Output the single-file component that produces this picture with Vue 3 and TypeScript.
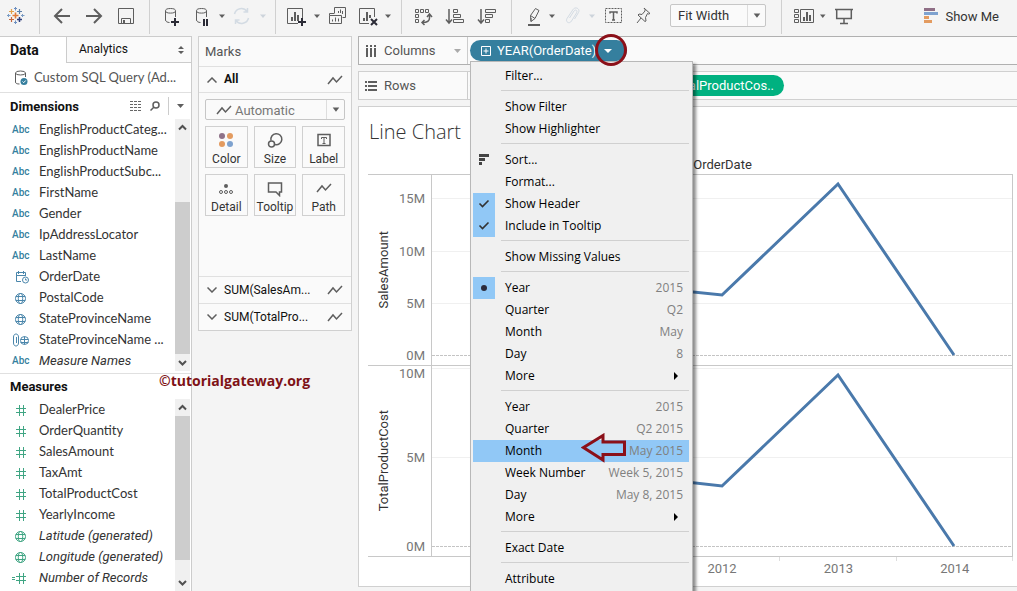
<script setup lang="ts">
import { ref } from 'vue'

type FieldIcon = 'abc' | 'date' | 'globe' | 'clip' | 'num' | 'calc'
interface Field { name: string; icon: FieldIcon; generated?: boolean }
interface MenuItem { label: string; hint?: string; mark?: 'check' | 'dot' | 'sort'; sub?: boolean; active?: boolean }
interface Tick { label: string; y: number; zero?: boolean; labelY?: number }
interface Pane { title: string; ticks: Tick[]; points: string }

const dimensions: Field[] = [
  { name: 'EnglishProductCateg...', icon: 'abc' },
  { name: 'EnglishProductName', icon: 'abc' },
  { name: 'EnglishProductSubc...', icon: 'abc' },
  { name: 'FirstName', icon: 'abc' },
  { name: 'Gender', icon: 'abc' },
  { name: 'IpAddressLocator', icon: 'abc' },
  { name: 'LastName', icon: 'abc' },
  { name: 'OrderDate', icon: 'date' },
  { name: 'PostalCode', icon: 'globe' },
  { name: 'StateProvinceName', icon: 'globe' },
  { name: 'StateProvinceName ...', icon: 'clip' },
  { name: 'Measure Names', icon: 'abc', generated: true },
]
const measures: Field[] = [
  { name: 'DealerPrice', icon: 'num' },
  { name: 'OrderQuantity', icon: 'num' },
  { name: 'SalesAmount', icon: 'num' },
  { name: 'TaxAmt', icon: 'num' },
  { name: 'TotalProductCost', icon: 'num' },
  { name: 'YearlyIncome', icon: 'num' },
  { name: 'Latitude (generated)', icon: 'globe', generated: true },
  { name: 'Longitude (generated)', icon: 'globe', generated: true },
  { name: 'Number of Records', icon: 'calc', generated: true },
]
const fieldGroups = [
  { title: 'Dimensions', key: 'dim', fields: dimensions },
  { title: 'Measures', key: 'mea', fields: measures },
]
const menu: MenuItem[][] = [
  [{ label: 'Filter...' }],
  [{ label: 'Show Filter' }, { label: 'Show Highlighter' }],
  [
    { label: 'Sort...', mark: 'sort' },
    { label: 'Format...' },
    { label: 'Show Header', mark: 'check' },
    { label: 'Include in Tooltip', mark: 'check' },
  ],
  [{ label: 'Show Missing Values' }],
  [
    { label: 'Year', hint: '2015', mark: 'dot' },
    { label: 'Quarter', hint: 'Q2' },
    { label: 'Month', hint: 'May' },
    { label: 'Day', hint: '8' },
    { label: 'More', sub: true },
  ],
  [
    { label: 'Year', hint: '2015' },
    { label: 'Quarter', hint: 'Q2 2015' },
    { label: 'Month', hint: 'May 2015', active: true },
    { label: 'Week Number', hint: 'Week 5, 2015' },
    { label: 'Day', hint: 'May 8, 2015' },
    { label: 'More', sub: true },
  ],
  [{ label: 'Exact Date' }],
  [{ label: 'Attribute' }],
]
const panes: Pane[] = [
  {
    title: 'SalesAmount',
    ticks: [{ label: '15M', y: 23 }, { label: '10M', y: 76 }, { label: '5M', y: 128 }, { label: '0M', y: 180, zero: true }],
    points: '58,177 174,108 290,120 406,9 522,180',
  },
  {
    title: 'TotalProductCost',
    ticks: [{ label: '10M', y: 2, labelY: 7 }, { label: '5M', y: 91 }, { label: '0M', y: 180, zero: true }],
    points: '58,177 174,107 290,120 406,9 522,180',
  },
]
const paneHeight = 190
const years = ['2010', '2011', '2012', '2013', '2014']
const markButtons = ['Color', 'Size', 'Label', 'Detail', 'Tooltip', 'Path']
const markCards = ['SUM(SalesAm...', 'SUM(TotalPro...']
const fit = ref('Fit Width')
const markType = ref('Automatic')
</script>

<template>
  <div class="app">
    <header class="toolbar">
      <div class="group g-logo">
        <svg class="ic" viewBox="0 0 24 24" aria-hidden="true" fill="none" stroke-width="1.2">
          <path d="M11.500 8.500v6M8.500 11.500h6" stroke="#e07b39" stroke-width="1.600" />
          <path d="M7.500 5v5M5 7.500h5" stroke="#e3a04b" /><path d="M15.500 5v5M13 7.500h5" stroke="#5b7fa8" />
          <path d="M7.500 13v5M5 15.500h5" stroke="#c5673f" /><path d="M15.500 13v5M13 15.500h5" stroke="#2f3f7c" stroke-width="1.500" />
          <path d="M11.500 3v3.500M10 4.500h3M11.500 16.500V20M10 18.500h3" stroke="#6d8fc0" stroke-width="1" />
          <path d="M4.500 10v3M3 11.500h3.500M18.500 10v3M17 11.500h3.500" stroke="#7b9cc4" stroke-width="1" />
        </svg>
      </div>
      <div class="group g-nav">
        <button aria-label="Undo"><svg class="ic" viewBox="0 0 24 24"><path class="s2" d="M20 12H5M12 5l-7 7 7 7" /></svg></button>
        <button aria-label="Redo"><svg class="ic" viewBox="0 0 24 24"><path class="s2" d="M4 12h15M12 5l7 7-7 7" /></svg></button>
        <button aria-label="Save"><svg class="ic" viewBox="0 0 24 24"><path class="s1" d="M4.500 4.500h15v15h-15zM7.500 19v-4.500h9V19" /><path class="f" d="M9 16h2v3H9z" /></svg></button>
      </div>
      <div class="group g-data">
        <button aria-label="New data source"><svg class="ic" viewBox="0 0 24 24"><path class="s1" d="M5.500 7v9c0 1.500 2 2.500 4 2.500M15.500 7v6" /><ellipse class="s1" cx="10.500" cy="6.800" rx="5" ry="2.300" /><path class="dk" d="M15 14v8M11 18h8" /></svg></button>
        <button aria-label="Pause updates"><svg class="ic" viewBox="0 0 24 24"><path class="s1" d="M8.500 7v9c0 1.500 2 2.500 4 2.500M18.500 7v6" /><ellipse class="s1" cx="13.500" cy="6.800" rx="5" ry="2.300" /><path class="dk" d="M16 15v7M19 15v7" /></svg></button>
        <button class="caret" aria-label="Update options"><svg viewBox="0 0 10 24"><path class="f" d="M3 10.500h6l-3 3.500z" /></svg></button>
        <button aria-label="Refresh" disabled><svg class="ic off" viewBox="0 0 24 24"><path class="s15" d="M4.500 10A7 7 0 0 1 17 7.500M18.500 14A7 7 0 0 1 6 16.500M17.500 4v4h-4M5.500 20v-4h4" /></svg></button>
        <button class="caret" aria-label="Refresh options" disabled><svg class="off" viewBox="0 0 10 24"><path class="f" d="M2 10.500h6L5 14z" /></svg></button>
      </div>
      <div class="group g-sheet">
        <button aria-label="New worksheet"><svg class="ic" viewBox="0 0 24 24"><path class="s1" d="M18.500 14V4.500h-15v15H14" /><path class="s2" d="M8 17v-4M11 17V8M14 17v-6" /><path class="dk" d="M18 14v8M14 18h8" /></svg></button>
        <button class="caret" aria-label="Worksheet options"><svg viewBox="0 0 10 24"><path class="f" d="M2 10.500h6L5 14z" /></svg></button>
        <button aria-label="Duplicate"><svg class="ic" viewBox="0 0 24 24"><path class="s1" d="M8.500 9V3.500h11v10h-3M3.500 11.500h12v8h-12zM3.500 11.500v-2h5M12.500 9V7M14.500 9V5.500M16.500 10V7" /><path class="s1" d="M6.500 17.500v-2M9.500 17.500v-4M12.500 17.500v-3" /></svg></button>
        <button aria-label="Clear sheet"><svg class="ic" viewBox="0 0 24 24"><path class="s1" d="M20.500 13V4.500h-15v15H15" /><path class="s2" d="M10 17v-3M13 17V8M16 14v-3" /><path class="dk" d="M17 15l6 6M23 15l-6 6" /></svg></button>
        <button class="caret" aria-label="Clear options"><svg viewBox="0 0 10 24"><path class="f" d="M3 10.500h6l-3 3.500z" /></svg></button>
      </div>
      <div class="group g-sort">
        <button aria-label="Swap rows and columns"><svg class="ic" viewBox="0 0 24 24"><path class="s1" d="M4.500 5.500h3v3h-3zM9.500 5.500h3v3h-3zM14.500 5.500h3v3h-3zM4.500 10.500h3v3h-3zM4.500 15.500h3v3h-3z" /><path class="s15" d="M18.500 11v3c0 3-2 4.500-7 4.500M16 13l2.500-3 2.500 3M13.500 16L11 18.500l2.500 2.500" /></svg></button>
        <button aria-label="Sort ascending"><svg class="ic" viewBox="0 0 24 24"><path class="s15" d="M6 5v14M3 15.500L6 19l3-3.500" /><path class="s1" d="M10.500 5.500h4v3h-4zM10.500 10.500h7v3h-7zM10.500 15.500h10v3h-10z" /></svg></button>
        <button aria-label="Sort descending"><svg class="ic" viewBox="0 0 24 24"><path class="s15" d="M6 5v14M3 15.500L6 19l3-3.500" /><path class="s1" d="M10.500 5.500h10v3h-10zM10.500 10.500h7v3h-7zM10.500 15.500h4v3h-4z" /></svg></button>
      </div>
      <div class="group g-tools">
        <button aria-label="Highlight"><svg class="ic" viewBox="0 0 24 24"><path class="s1" d="M9.500 11.500L14.500 4.500l3.500 2-4 8-4 3zM9.500 11.500l4.500 3M10 14v3.500" /><path class="s2" d="M7 21h12" /></svg></button>
        <button class="caret" aria-label="Highlight options"><svg viewBox="0 0 10 24"><path class="f" d="M1 10.500h6L4 14z" /></svg></button>
        <button aria-label="Group" disabled><svg class="ic off" viewBox="0 0 24 24"><path class="s1" d="M8.500 14l4.500-7c1.500-2 4-.5 2.500 2L10.500 17c-2 3.500-6.500 1-4.500-2.500l6-9c2.500-3.500 7.500-.5 5.500 3L13.500 15" /></svg></button>
        <button class="caret" aria-label="Group options" disabled><svg class="off" viewBox="0 0 10 24"><path class="f" d="M1 10.500h6L4 14z" /></svg></button>
        <button aria-label="Show mark labels"><svg class="ic" viewBox="0 0 24 24"><rect class="s1" x="4.500" y="4.500" width="16" height="14" stroke-dasharray="2 1" /><path class="s15" d="M9 9.500V8h7v1.500M12.500 8v8M11 16h3" /></svg></button>
        <button class="pin" aria-label="Fix axes"><svg class="ic" viewBox="0 0 24 24"><path class="s1" d="M12 4l6 5.500-1.500.5-1-.5-2 4 .5 3.500-1 .5L6 11l1-1 3 .5 3-3.500V5.500zM9 14l-4 5" /></svg></button>
        <span class="sel fit">
          <select v-model="fit" aria-label="Fit"><option>Fit Width</option><option>Standard</option></select>
          <svg viewBox="0 0 18 22" aria-hidden="true"><path class="f" d="M6 9h7l-3.500 4.500z" /></svg>
        </span>
      </div>
      <div class="group g-view">
        <button aria-label="Show cards"><svg class="ic" viewBox="0 0 24 24"><path class="s1" d="M2.500 5.500h4v3h-4zM2.500 10.500h4v3h-4zM2.500 15.500h4v3h-4zM8.500 5.500h13v13h-13z" /><path class="s2" d="M12 17v-4M15 17V8M18 17v-6" /></svg></button>
        <button class="caret" aria-label="Card options"><svg viewBox="0 0 10 24"><path class="f" d="M1 10.500h5.500l-2.700 3.500z" /></svg></button>
        <button aria-label="Presentation mode"><svg class="ic" viewBox="0 0 24 24"><path class="s15" d="M3 5.500h18M4.700 6v8.500h14.600V6M12 14.500v5M8 19.500h8" /></svg></button>
      </div>
      <button class="showme">
        <svg viewBox="0 0 15 16" aria-hidden="true"><path fill="#8f6f86" d="M0 0h11v3H0z" /><path fill="#7ea2cf" d="M0 4h14v3H0z" /><path fill="#e39b60" d="M0 8h5v3H0zM0 12h8v3H0z" /></svg>
        Show Me
      </button>
    </header>

    <div class="body">
      <aside class="data">
        <div class="tabs">
          <button class="tab on">Data</button>
          <button class="tab">Analytics
            <svg viewBox="0 0 6 8" aria-hidden="true"><path class="f" d="M0 3l3-3 3 3zM0 5h6L3 8z" /></svg>
          </button>
        </div>
        <div class="source">
          <svg viewBox="0 0 14 16" aria-hidden="true"><path class="s1" d="M1.500 3v9c0 1.500 1.500 2 4 2M11.500 3v4" /><ellipse class="s1" cx="6.500" cy="3" rx="5" ry="2" /><circle cx="10" cy="11.500" r="3.500" fill="#357f9e" /><path d="M8.500 11.500l1.200 1.200 2-2.200" fill="none" stroke="#fff" /></svg>
          <span>Custom SQL Query (Ad...</span>
        </div>
        <section v-for="g in fieldGroups" :key="g.key" class="fields" :class="g.key">
          <div class="fhead">
            <h2>{{ g.title }}</h2>
            <template v-if="g.key === 'dim'">
              <button aria-label="View as list"><svg width="12" height="10" viewBox="0 0 12 10"><path d="M0 .5h12M0 3.500h12M0 6.500h12M0 9.500h12" fill="none" stroke="#666" stroke-dasharray="3 1" /></svg></button>
              <button aria-label="Find field"><svg width="10" height="10" viewBox="0 0 10 10"><circle class="s15" cx="6" cy="4" r="3" /><path class="s15" d="M4 6L.5 9.500" /></svg></button>
              <button class="fmenu" aria-label="Pane menu"><svg width="7" height="4" viewBox="0 0 7 4"><path class="f" d="M0 0h7L3.500 4z" /></svg></button>
            </template>
          </div>
          <div class="fbody">
            <ul>
              <li v-for="f in g.fields" :key="f.name" :class="{ gen: f.generated }">
                <span v-if="f.icon === 'abc'" class="abc">Abc</span>
                <svg v-else class="fi" viewBox="0 0 18 14" aria-hidden="true">
                  <g v-if="f.icon === 'num'"><path d="M4 5.500h10M4 9.500h10M7.500 2v11M11.500 2v11" /></g>
                  <g v-else-if="f.icon === 'calc'"><path d="M0 6.500h3M0 8.500h3M4 5.500h10M4 9.500h10M7.500 2v11M11.500 2v11" /></g>
                  <g v-else-if="f.icon === 'globe'"><circle cx="8.500" cy="7.500" r="5" /><ellipse cx="8.500" cy="7.500" rx="2.200" ry="5" /><path d="M3.800 5.500h9.400M3.800 9.500h9.400" /></g>
                  <g v-else-if="f.icon === 'clip'"><path d="M1.500 4c0-4 5-4 5 0v6c0 4-5 4-5 0zM4.500 4v6" /><circle cx="12.500" cy="7.500" r="4" /><path d="M12.500 3.500v8M8.500 6.500h8M8.500 9.500h8" /></g>
                  <g v-else><path d="M9 11.500H4.500v-9h9V6M4.500 5.500h9M6.500 1v3M11.500 1v3" /><circle cx="13.500" cy="10" r="3" /><path d="M13.500 8.500V10H15" /></g>
                </svg>
                <span>{{ f.name }}</span>
              </li>
            </ul>
            <div class="scroll" aria-hidden="true">
              <svg viewBox="0 0 15 17"><path d="M4 10.500L7.500 7l3.500 3.500" /></svg>
              <i></i>
              <svg viewBox="0 0 15 17"><path d="M4 7l3.500 3.500L11 7" /></svg>
            </div>
          </div>
        </section>
      </aside>

      <section class="marks">
        <h3>Marks</h3>
        <div class="mrow all">
          <svg width="10" height="6" viewBox="0 0 10 6"><path class="s15" d="M.5 5.500L5 1l4.500 4.500" /></svg>
          <b>All</b>
          <svg class="zig" viewBox="0 0 16 10"><path class="s15" d="M1 9l5-6 3.500 4L15 1" /></svg>
        </div>
        <div class="mbody">
          <span class="sel type">
            <svg class="zig" viewBox="0 0 16 10" aria-hidden="true"><path class="s15" d="M1 9l5-6 3.500 4L15 1" /></svg>
            <select v-model="markType" aria-label="Mark type"><option>Automatic</option><option>Line</option></select>
            <svg class="arr" viewBox="0 0 18 20" aria-hidden="true"><path class="f" d="M6 8h7l-3.500 4.500z" /></svg>
          </span>
          <div class="mgrid">
            <button v-for="m in markButtons" :key="m">
              <svg viewBox="0 0 20 18" aria-hidden="true">
                <g v-if="m === 'Color'"><circle cx="6" cy="5" r="3" fill="#8f7289" /><circle cx="14" cy="5" r="3" fill="#e39b60" /><circle cx="6" cy="13" r="3" fill="#e39b60" /><circle cx="14" cy="13" r="3" fill="#7ea2cf" /></g>
                <g v-else-if="m === 'Size'"><path class="s15" d="M6 9.500A5.500 5.500 0 1 1 10 13.500" /><circle class="s15" cx="6.500" cy="13" r="3" /></g>
                <g v-else-if="m === 'Label'"><rect class="s15" x="4" y="3.500" width="12" height="11" /><path class="s1" d="M7.500 8V6.500h5V8M10 6.500v6M8.500 12.500h3" /></g>
                <g v-else-if="m === 'Detail'"><circle class="f" cx="10" cy="7" r="2" /><circle class="s1" cx="5" cy="13" r="1.500" /><circle class="s1" cx="10" cy="13" r="1.500" /><circle class="s1" cx="15" cy="13" r="1.500" /></g>
                <g v-else-if="m === 'Tooltip'"><path class="s15" d="M3.500 4h13v9h-2v3.500L11 13H3.500z" /></g>
                <g v-else><path class="s15" d="M3 13l5-6 3.500 4L17 5" /></g>
              </svg>
              {{ m }}
            </button>
          </div>
        </div>
        <div v-for="c in markCards" :key="c" class="mrow">
          <svg width="10" height="6" viewBox="0 0 10 6"><path class="s15" d="M.5 .5L5 5 9.500 .5" /></svg>
          <span>{{ c }}</span>
          <svg class="zig" viewBox="0 0 16 10"><path class="s15" d="M1 9l5-6 3.500 4L15 1" /></svg>
        </div>
      </section>

      <main>
        <div class="shelf cols">
          <div class="sname">
            <svg viewBox="0 0 12 12" aria-hidden="true"><path class="f" d="M1 0h2v2H1zM5 0h2v2H5zM9 0h2v2H9zM1 3h2v9H1zM5 3h2v9H5zM9 3h2v9H9z" /></svg>
            Columns
            <svg class="scar" viewBox="0 0 7 4" aria-hidden="true"><path fill="#aaa" d="M0 0h7L3.500 4z" /></svg>
          </div>
          <div class="anchor">
            <button class="pill blue" aria-haspopup="menu">
              <svg class="plus" viewBox="0 0 10 10" aria-hidden="true"><path d="M.5 .5h9v9h-9zM5 2.500v5M2.500 5h5" fill="none" stroke="#fff" /></svg>
              <span>YEAR(OrderDate)</span>
              <svg class="pcar" viewBox="0 0 8 4" aria-hidden="true"><path fill="#fff" d="M0 0h8L4 4z" /></svg>
            </button>
            <div class="menu" role="menu">
              <div v-for="(sec, i) in menu" :key="i" class="msec">
                <button v-for="it in sec" :key="it.label" role="menuitem" class="mi" :class="{ active: it.active }">
                  <span class="mk" :class="it.mark">
                    <svg v-if="it.mark === 'check'" viewBox="0 0 22 22"><path d="M6.500 10.500l3 3 6-6" fill="none" stroke="#333" stroke-width="1.600" /></svg>
                    <svg v-else-if="it.mark === 'dot'" viewBox="0 0 22 22"><circle cx="11" cy="11" r="3" fill="#2b2b3b" /></svg>
                    <svg v-else-if="it.mark === 'sort'" viewBox="0 0 22 22"><path fill="#444" d="M6 5h10v3H6zM6 9h6v3H6zM6 13h3v3H6z" /></svg>
                  </span>
                  <span class="ml">{{ it.label }}</span>
                  <span v-if="it.hint" class="mh">{{ it.hint }}</span>
                  <svg v-if="it.sub" class="sub" viewBox="0 0 4 8"><path d="M0 0l4 4-4 4z" /></svg>
                </button>
              </div>
            </div>
            <svg class="ring" viewBox="0 0 34 34" aria-hidden="true"><circle cx="17" cy="17" r="14.500" /></svg>
            <svg class="arrow" viewBox="0 0 46 30" aria-hidden="true"><path d="M2.500 14.500L22 2.500v6.500h21.500v12.500H22V27z" /></svg>
          </div>
        </div>
        <div class="shelf rows">
          <div class="sname">
            <svg viewBox="0 0 12 12" aria-hidden="true"><path class="f" d="M0 1h2v2H0zM0 5h2v2H0zM0 9h2v2H0zM3 1h9v2H3zM3 5h9v2H3zM3 9h9v2H3z" /></svg>
            Rows
          </div>
          <div class="anchor">
            <span class="pill green"></span>
            <button class="pill green"><span>SUM(TotalProductCos..</span></button>
          </div>
        </div>

        <section class="view">
          <h1>Line Chart</h1>
          <div class="chart">
            <div class="ctitle">OrderDate</div>
            <div v-for="p in panes" :key="p.title" class="pane">
              <div class="axis"><span class="vert">{{ p.title }}</span></div>
              <div class="ticks">
                <span v-for="t in p.ticks" :key="t.label" :style="{ top: ((t.labelY ?? t.y) / paneHeight) * 100 + '%' }">{{ t.label }}</span>
              </div>
              <svg class="plot" viewBox="0 0 580 190" preserveAspectRatio="none">
                <line v-for="t in p.ticks" :key="t.label" x1="0" x2="580" :y1="t.y + 0.5" :y2="t.y + 0.5" :class="{ zero: t.zero }" />
                <polyline :points="p.points" />
              </svg>
            </div>
            <div class="years"><span v-for="y in years" :key="y">{{ y }}</span></div>
          </div>
        </section>
      </main>
    </div>
    <div class="credit">©tutorialgateway.org</div>
  </div>
</template>

<style>
html, body { margin: 0; overflow: hidden; }
</style>

<style scoped>
.app { position: relative; display: flex; flex-direction: column; height: 100vh; min-height: 560px; overflow: hidden; background: #f4f4f4; color: #333; font: 13px/21px Roboto, "Open Sans", sans-serif; }
* { box-sizing: border-box; }
button, select { margin: 0; padding: 0; border: 0; background: none; color: inherit; font: inherit; }
svg { display: block; flex: none; }
h1, h2, h3, ul { margin: 0; padding: 0; font: inherit; list-style: none; }
.s1, .s15, .s2, .dk { fill: none; stroke: #5e5e5e; stroke-width: 1; }
.s15 { stroke-width: 1.5; }
.s2 { stroke-width: 2; }
.dk { stroke: #2b2b36; stroke-width: 2; }
.f { fill: #5e5e5e; }
.off .s1, .off .s15 { stroke: #d3dbe3; }
.off .f { fill: #cdd4db; }

.toolbar { display: flex; flex: none; height: 36px; }
.group { display: flex; align-items: flex-start; gap: 4px; height: 34px; padding: 4px 0 0; border-right: 1px solid #d0d0d0; }
.ic { width: 24px; height: 24px; }
.caret, .caret svg { width: 10px; height: 24px; }
.g-logo { padding-left: 4px; padding-right: 11px; }
.g-nav { gap: 8px; padding-left: 10px; padding-right: 11px; }
.g-data { padding-left: 10px; padding-right: 7px; }
.g-sheet { padding-left: 8px; padding-right: 9px; }
.g-sort { gap: 8px; padding-left: 9px; padding-right: 12px; }
.g-tools { gap: 3px; padding-left: 9px; padding-right: 15px; }
.g-view { gap: 3px; padding-left: 10px; border-right: 0; }
.pin { margin-left: 4px; }
.sel { display: flex; align-items: center; border: 1px solid #c6c6c6; border-radius: 2px; background: #fafafa; }
.sel select { flex: 1; align-self: stretch; min-width: 0; appearance: none; }
.fit { width: 96px; height: 23px; margin-left: 11px; }
.fit select { padding-left: 7px; }
.fit svg { width: 18px; height: 21px; border-left: 1px solid #ddd; }
.showme { display: flex; align-items: center; gap: 6px; height: 32px; margin-left: auto; padding-right: 18px; }
.showme svg { width: 15px; height: 16px; }

.body { display: flex; flex: 1; min-height: 0; }
.data { display: flex; flex-direction: column; flex: none; width: 192px; border-top: 1px solid #ccc; border-right: 1px solid #ccc; background: #fff; }
.tabs { display: flex; flex: none; height: 26px; }
.tab { display: flex; align-items: center; justify-content: space-between; flex: 1; padding: 0 7px 0 12px; border-left: 1px solid #ccc; border-bottom: 1px solid #ccc; background: #fafafa; color: #111; font-size: 12px; }
.tab.on { flex: none; width: 66px; padding-left: 10px; border: 0; background: #fff; font-size: 14px; font-weight: 700; }
.tab svg { width: 6px; height: 8px; }
.source { display: flex; align-items: center; flex: none; gap: 6px; height: 30px; padding-left: 14px; border-bottom: 1px solid #e0e0e0; color: #555; font-family: Lato, sans-serif; }
.source svg { width: 14px; height: 16px; }
.fields.dim { flex: none; }
.fields.mea { display: flex; flex-direction: column; flex: 1; min-height: 0; border-top: 1px solid #e0e0e0; }
.mea .fbody { flex: 1; min-height: 0; }
.fhead { display: flex; align-items: center; flex: none; height: 26px; padding-left: 10px; }
.mea .fhead { height: 25px; }
.fhead h2 { flex: 1; color: #111; font-weight: 700; }
.fhead button { margin-right: 8px; }
.fhead .fmenu { height: 18px; margin: 0 7px 0 0; padding-left: 8px; border-left: 1px solid #ccc; }
.fbody { display: flex; font-family: Lato, sans-serif; }
.dim .fbody { padding-bottom: 2px; }
.fbody ul { flex: 1; min-width: 0; }
.fbody li { display: flex; align-items: center; height: 21px; padding-left: 12px; white-space: nowrap; }
.fbody .gen { font-family: Roboto, sans-serif; font-style: italic; }
.abc, .fi { width: 18px; margin-right: 9px; }
.abc { color: #357f9e; font-family: Roboto, sans-serif; font-weight: 500; font-size: 10px; font-style: normal; }
.fi { height: 14px; fill: none; stroke: #4a86ab; }
.mea .fi { stroke: #3fa583; }
.scroll { display: flex; flex-direction: column; width: 15px; margin-right: 1px; background: #f0f0f0; }
.scroll svg { width: 15px; height: 17px; fill: none; stroke: #505050; stroke-width: 2; }
.scroll i { flex: 1; background: #cdcdcd; }
.dim .scroll i { margin-top: 66px; }
.mea .scroll i { margin-bottom: 14px; }

.marks { align-self: flex-start; flex: none; width: 154px; margin-left: 6px; border: 1px solid #d0d0d0; background: #fafafa; }
.marks h3 { height: 29px; padding-left: 6px; line-height: 29px; color: #555; }
.mrow { display: flex; align-items: center; gap: 7px; height: 27px; padding: 0 8px; border-top: 1px solid #e0e0e0; color: #111; font-size: 12px; }
.mrow.all { height: 26px; }
.mrow .zig { margin-left: auto; }
.zig { width: 16px; height: 10px; }
.mbody { height: 184px; padding: 6px; border-top: 1px solid #e0e0e0; }
.type { height: 21px; color: #777; }
.type .zig { margin: 0 3px 0 10px; }
.type .arr { width: 18px; height: 19px; border-left: 1px solid #ddd; }
.mgrid { display: grid; grid-template-columns: repeat(3, 1fr); gap: 6px; margin-top: 6px; }
.mgrid button { display: flex; flex-direction: column; align-items: center; height: 42px; padding-top: 4px; border: 1px solid #d0d0d0; font-size: 12px; }
.mgrid svg { width: 20px; height: 18px; }

main { display: flex; flex-direction: column; flex: 1; min-width: 0; margin-left: 6px; }
.shelf { display: flex; flex: none; height: 29px; margin-bottom: 6px; border: 1px solid #d0d0d0; border-right: 0; background: #fafafa; }
.cols { border-color: #b0b0b0; }
.sname { display: flex; align-items: center; gap: 7px; width: 109px; padding: 0 6px; border-right: 1px solid #ccc; color: #555; }
.sname svg { width: 12px; height: 12px; }
.sname .scar { width: 7px; height: 4px; margin-left: auto; }
.anchor { position: relative; display: flex; padding: 3px 2px; }
.pill { display: flex; align-items: center; width: 157px; height: 21px; padding: 0 15px 0 10px; border-radius: 11px; color: #fff; white-space: nowrap; }
.blue { background: #357f9e; }
.green { justify-content: flex-end; padding-right: 10px; background: #00b180; }
.plus { width: 10px; height: 10px; margin: 0 6px 0 1px; }
.pcar { width: 8px; height: 4px; margin-left: auto; }
.menu { position: absolute; z-index: 2; top: 24px; left: 2px; width: 223px; padding: 3px 2px; border: 1px solid #b8b8b8; background: #f0f0f0; box-shadow: 3px 3px 3px rgba(0, 0, 0, .45); color: #000; font: 12px/22px "Open Sans", sans-serif; }
.msec + .msec::before { content: ""; display: block; height: 1px; margin: 3px 1px 5px 28px; background: #d0d0d0; }
.mi { display: flex; align-items: center; width: 100%; height: 22px; padding-right: 7px; text-align: left; }
.active { background: #91c8f6; background-clip: padding-box; border-right: 1px solid transparent; padding-right: 6px; }
.mk { flex: none; width: 22px; height: 22px; margin-right: 10px; }
.check, .dot { background: #91c8f6; }
.ml { flex: 1; }
.mh { color: #808080; }
.sub { width: 4px; height: 8px; margin-right: 5px; }
.ring { position: absolute; z-index: 3; top: -4px; left: 126px; width: 34px; height: 34px; fill: none; stroke: #8b1019; stroke-width: 3; }
.arrow { position: absolute; z-index: 3; top: 396px; left: 113px; width: 46px; height: 30px; fill: none; stroke: #8b1019; stroke-width: 3; }

.view { display: flex; flex-direction: column; flex: 1; min-height: 0; margin: 0 0 4px; padding: 0 4px 0 9px; border: 1px solid #d0d0d0; border-right: 0; background: #fff; }
.view h1 { height: 48px; padding-left: 1px; line-height: 50px; font-family: "Open Sans", sans-serif; font-size: 20px; font-weight: 300; }
.chart { display: flex; flex-direction: column; flex: 1; min-height: 0; }
.ctitle { height: 19px; padding-left: 64px; text-align: center; line-height: 19px; }
.pane { display: flex; flex: 1; min-height: 0; border-top: 1px solid #c8c8c8; }
.axis { display: flex; align-items: center; justify-content: center; width: 30px; }
.vert { writing-mode: vertical-rl; transform: rotate(180deg); }
.ticks { position: relative; width: 33px; color: #777; }
.ticks span { position: absolute; right: 6px; transform: translateY(-50%); }
.plot { flex: 1; min-width: 0; height: 100%; border-left: 1px solid #c8c8c8; border-right: 1px solid #c8c8c8; box-sizing: border-box; }
.plot line { stroke: #f0f0f0; vector-effect: non-scaling-stroke; }
.plot .zero { stroke: #c4c4c4; stroke-dasharray: 3 1; }
.plot polyline { fill: none; stroke: #4a79ab; stroke-width: 3; vector-effect: non-scaling-stroke; }
.years { display: flex; height: 30px; padding-left: 63px; border-top: 1px solid #c8c8c8; color: #777; line-height: 24px; text-align: center; }
.years span { flex: 1; background: linear-gradient(#ddd, #ddd) right top / 1px 4px no-repeat; }
.credit { position: absolute; z-index: 4; top: 371px; left: 159px; color: #7e1216; font: bold 14px/20px "Open Sans", sans-serif; }
</style>
